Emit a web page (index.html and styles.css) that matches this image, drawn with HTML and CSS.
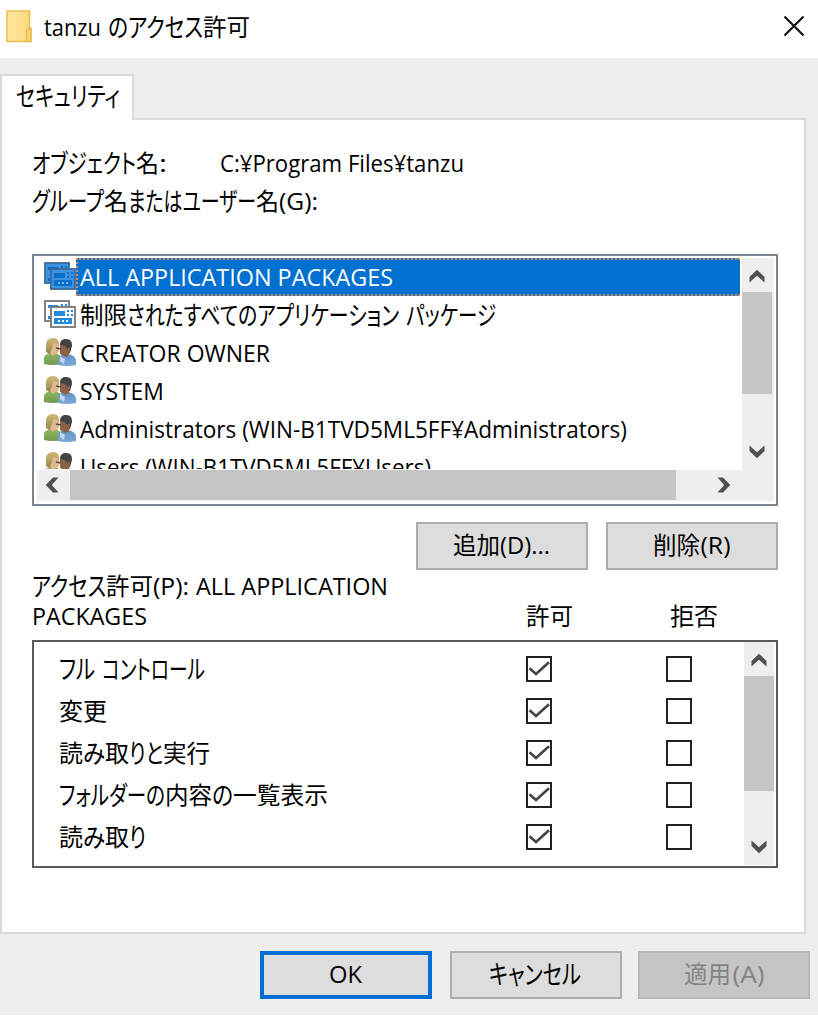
FILE: index.html
```html
<!DOCTYPE html>
<html lang="ja">
<head>
<meta charset="utf-8">
<title>tanzu のアクセス許可</title>
<link rel="stylesheet" href="styles.css">
</head>
<body>
<svg class="defs" width="0" height="0">
  <defs>
    <linearGradient id="hairA" x2="0" y2="1"><stop stop-color="#d0bc77"/><stop offset="1" stop-color="#988149"/></linearGradient>
    <linearGradient id="green" x2="0" y2="1"><stop stop-color="#91b866"/><stop offset="1" stop-color="#70994b"/></linearGradient>
    <linearGradient id="blue" x2="0" y2="1"><stop stop-color="#6494c8"/><stop offset="1" stop-color="#7ba7d6"/></linearGradient>
    <symbol id="people" viewBox="0 0 32 30">
      <path d="M0 26V20C0 17 4 15 9 15s9 3 9 8v3q-9 2-18 0z" fill="url(#green)"/>
      <path d="M14 27v-4c0-5 3-7 8-7 6 0 10 3 10 7v4q-9 2-18 0z" fill="url(#blue)"/>
      <path d="M2 14V7c0-5 3-7 7-7 5 0 6 3 6 7l-1 8q-7 3-12-1z" fill="url(#hairA)"/>
      <path d="M9 5l5 1 1 6q-1 5-4 4l-2 2-3-3 2-5z" fill="#e0b78c"/>
      <path d="M16 7c0-5 3-6 6-6 5 0 6 3 6 7l-2 7h-5z" fill="#434343"/>
      <path d="M16 7l5 1 2 3 2-2 1 2-1 6q-3 3-5 1l-4-2z" fill="#8c6244"/>
      <path d="M16 18l3 2 2 1-1 5-4-3z" fill="#c3d8ea"/>
      <path d="M12 10l5 1" stroke="#554a43" stroke-width="1.5"/>
    </symbol>
    <symbol id="apps" viewBox="0 0 32 28">
      <rect x="1" y="1" width="24" height="20" class="frame"/>
      <path d="M4 5h10v3H4zM17 4h2v2h-2zM21 4h2v2h-2zM4 16h3v3H4z" class="ink"/>
      <rect x="7" y="7" width="24" height="20" class="frame"/>
      <path d="M10 11h11v5H10zM23 10h2v2h-2zM27 10h2v2h-2zM23 14h2v2h-2zM27 14h2v2h-2zM10 18h18v6H10z" class="ink"/>
      <path d="M14 20h2v2h-2zM18 20h2v2h-2zM22 20h2v2h-2z" class="hole"/>
    </symbol>
    <symbol id="up" viewBox="0 0 16 14"><path d="M0.500 8L8 .7 15.500 8v5.500L8 6.800.5 13.500z" fill="#505050"/></symbol>
    <symbol id="tick" viewBox="0 0 22 22"><path d="M1.500 10.200L8 16 21 4.200" fill="none" stroke="#444" stroke-width="2.600"/></symbol>
  </defs>
</svg>
<div class="window">
  <header class="titlebar">
    <svg class="folder" viewBox="0 0 28 34"><defs><linearGradient id="fg"><stop stop-color="#ffe7a0"/><stop offset="1" stop-color="#fcda7b"/></linearGradient></defs><path d="M2 2h22.500V19H26V32.500H2z" fill="url(#fg)" stroke="#e9bd50" stroke-width="1.500"/><path d="M21.500 32.500V22q0-2 2-2h.5q2 0 2 2v10.500z" fill="#f8d376" stroke="#e9bd50" stroke-width="1.500"/></svg>
    <h1 class="title"><span class="t" data-w="57">tanzu</span><span class="gap"></span><span class="t" data-w="95">のアクセス</span><span class="t" data-w="47">許可</span></h1>
    <svg class="close" viewBox="0 0 22 22"><path d="M1.500 1.500l19 19M20.500 1.500l-19 19" stroke="#111" stroke-width="2.200"/></svg>
  </header>
  <nav class="tabs"><div class="tab"><span class="t" data-w="104">セキュリティ</span></div></nav>
  <main class="panel">
    <div class="line object"><div class="label"><span class="t" data-w="104">オブジェクト</span><span class="t" data-w="23">名</span><span class="t" data-w="8">:</span></div><div><span class="t" data-w="244">C:¥Program Files¥tanzu</span></div></div>
    <div class="line"><span class="t" data-w="72">グループ</span><span class="t" data-w="24">名</span><span class="t" data-w="128">またはユーザー</span><span class="t" data-w="23">名</span><span class="t" data-w="39">(G):</span></div>
    <section class="groups">
      <ul class="rows">
        <li class="row selected"><svg class="ico apps"><use href="#apps"/></svg><div class="name"><span class="t" data-w="313">ALL APPLICATION PACKAGES</span></div></li>
        <li class="row"><svg class="ico apps"><use href="#apps"/></svg><div class="name"><span class="t" data-w="47">制限</span><span class="t" data-w="272">されたすべてのアプリケーション</span><span class="gap"></span><span class="t" data-w="90">パッケージ</span></div></li>
        <li class="row"><svg class="ico"><use href="#people"/></svg><div class="name"><span class="t" data-w="190">CREATOR OWNER</span></div></li>
        <li class="row"><svg class="ico"><use href="#people"/></svg><div class="name"><span class="t" data-w="84">SYSTEM</span></div></li>
        <li class="row"><svg class="ico"><use href="#people"/></svg><div class="name"><span class="t" data-w="547">Administrators (WIN-B1TVD5ML5FF¥Administrators)</span></div></li>
        <li class="row"><svg class="ico"><use href="#people"/></svg><div class="name"><span class="t" data-w="351">Users (WIN-B1TVD5ML5FF¥Users)</span></div></li>
      </ul>
      <div class="vbar"><svg class="arrow"><use href="#up"/></svg><i class="thumb"></i><svg class="arrow down"><use href="#up"/></svg></div>
      <div class="hbar"><svg class="arrow left"><use href="#up"/></svg><i class="thumb"></i><svg class="arrow right"><use href="#up"/></svg></div>
    </section>
    <div class="actions">
      <button class="btn"><span class="t" data-w="47">追加</span><span class="t" data-w="50">(D)...</span></button>
      <button class="btn"><span class="t" data-w="47">削除</span><span class="t" data-w="30">(R)</span></button>
    </div>
    <div class="heads">
      <div class="caption"><div><span class="t" data-w="74">アクセス</span><span class="t" data-w="47">許可</span><span class="t" data-w="36">(P):</span><span class="gap"></span><span class="t" data-w="192">ALL APPLICATION</span></div><div><span class="t" data-w="115">PACKAGES</span></div></div>
      <div class="col allow"><span class="t" data-w="47">許可</span></div>
      <div class="col"><span class="t" data-w="48">拒否</span></div>
    </div>
    <section class="perms">
      <ul class="list">
        <li class="perm"><div class="what"><span class="t" data-w="36">フル</span><span class="gap"></span><span class="t" data-w="103">コントロール</span></div><i class="box"><svg><use href="#tick"/></svg></i><i class="box"></i></li>
        <li class="perm"><div class="what"><span class="t" data-w="48">変更</span></div><i class="box"><svg><use href="#tick"/></svg></i><i class="box"></i></li>
        <li class="perm"><div class="what"><span class="t" data-w="24">読</span><span class="t" data-w="22">み</span><span class="t" data-w="24">取</span><span class="t" data-w="34">りと</span><span class="t" data-w="47">実行</span></div><i class="box"><svg><use href="#tick"/></svg></i><i class="box"></i></li>
        <li class="perm"><div class="what"><span class="t" data-w="106">フォルダーの</span><span class="t" data-w="47">内容</span><span class="t" data-w="21">の</span><span class="t" data-w="95">一覧表示</span></div><i class="box"><svg><use href="#tick"/></svg></i><i class="box"></i></li>
        <li class="perm"><div class="what"><span class="t" data-w="24">読</span><span class="t" data-w="22">み</span><span class="t" data-w="24">取</span><span class="t" data-w="17">り</span></div><i class="box"><svg><use href="#tick"/></svg></i><i class="box"></i></li>
      </ul>
      <div class="vbar"><svg class="arrow"><use href="#up"/></svg><i class="thumb"></i><svg class="arrow down"><use href="#up"/></svg></div>
    </section>
  </main>
  <footer class="footer">
    <button class="btn primary"><span class="t" data-w="33">OK</span></button>
    <button class="btn"><span class="t" data-w="92">キャンセル</span></button>
    <button class="btn disabled"><span class="t" data-w="47">適用</span><span class="t" data-w="32">(A)</span></button>
  </footer>
</div>
<script src="fit.js"></script>
</body>
</html>
```
FILE: styles.css
```css
* { box-sizing: border-box; }
body { margin: 0; background: #fff; color: #000; font: 24px/30px "Open Sans", "Noto Sans CJK JP", sans-serif; }
ul { list-style: none; margin: 0; padding: 0; }
i { display: block; }
.defs { display: block; position: absolute; }
.window { width: 818px; height: 1015px; background: #eee; overflow: hidden; }
.t { display: inline-block; white-space: pre; transform-origin: 0 50%; }
.kana { font-feature-settings: "palt"; transform-origin: 0 60%; }
.gap { display: inline-block; width: 7px; }

.titlebar { height: 58px; background: #fff; display: flex; align-items: center; padding: 0 13px 6px 5px; }
.folder { width: 28px; height: 34px; }
.title { flex: 1; margin: 2px 0 0 11px; font-size: inherit; font-weight: 400; }
.close { width: 22px; height: 22px; }

.tabs { height: 60px; padding-top: 16px; }
.tab { width: 134px; height: 46px; border: 2px solid #dadada; border-bottom: 0; background: #fff; padding: 5px 0 0 14px; position: relative; z-index: 1; }
.panel { width: 806px; height: 816px; border: 2px solid #dadada; background: #fff; padding: 28px 26px 0 30px; }
.line { height: 38px; }
.object { display: flex; }
.label { width: 188px; }

.groups { width: 746px; height: 252px; margin-top: 30px; border: 2px solid #7f8490; padding: 2px 2px 3px 3px; display: grid; grid-template: 212px 1fr / 705px 1fr; }
.rows { overflow: hidden; height: 211px; }
.row { height: 38px; display: flex; padding-left: 7px; width: 703px; --frame: #fff; --edge: #777; --ink: #2388df; --hole: #fff; }
.selected { --frame: #3d93df; --edge: #3a6c9c; --ink: #086fca; --hole: #76b7ee; }
.ico { width: 32px; height: 30px; margin-top: 4px; }
.ico.apps { height: 28px; }
.frame { fill: var(--frame); stroke: var(--edge); stroke-width: 1.8; }
.ink { fill: var(--ink); }
.hole { fill: var(--hole); }
.name { flex: 1; padding: 4px 0 0 4px; height: 38px; }
.selected .name { background: #0070d1; color: #fff; border: 2px dotted #d88a58; border-right: 0; padding: 2px 0 0 2px; }
.vbar { background: #eee; display: flex; flex-direction: column; align-items: center; padding-right: 2px; }
.thumb { background: #c5c5c5; }
.arrow { width: 16px; height: 14px; flex: none; }
.vbar .arrow { margin-top: 11px; }
.vbar .thumb { width: 30px; height: 102px; margin-top: 9px; flex: none; }
.vbar .down { margin: auto 0 11px; transform: rotate(180deg); }
.hbar { grid-column: 1 / 3; background: #eee; display: flex; align-items: center; padding-bottom: 1px; }
.hbar .thumb { width: 606px; height: 30px; margin-left: 10px; }
.hbar .left { margin-left: 7px; transform: rotate(-90deg); }
.hbar .right { margin-left: 40px; transform: rotate(90deg); }

.actions { display: flex; justify-content: flex-end; gap: 18px; margin: 16px 0 0; width: 746px; }
.btn { display: block; width: 172px; height: 48px; border: 2px solid #adadad; background: #ddd; padding: 0 2px 2px 0; margin: 0; font: inherit; color: #000; white-space: nowrap; }
.heads { display: flex; height: 70px; padding-top: 1px; }
.caption { width: 494px; }
.col { padding-top: 30px; }
.allow { width: 144px; }

.perms { width: 746px; height: 228px; border: 2px solid #5a5a5a; padding: 0 2px 1px 0; display: flex; }
.list { width: 710px; flex: none; padding-top: 6px; }
.perm { display: flex; align-items: center; height: 42px; padding-left: 25px; }
.what { width: 467px; flex: none; }
.box { width: 26px; height: 26px; border: 2px solid #222; margin-right: 114px; flex: none; }
.box + .box { margin-right: 0; }
.box svg { display: block; width: 22px; height: 22px; }
.perms .vbar { width: 30px; padding-right: 0; }
.perms .thumb { height: 115px; }

.footer { display: flex; padding: 17px 0 0 260px; }
.footer .btn + .btn { margin-left: 18px; }
.footer .btn.disabled { margin-left: 16px; background: #c5c5c5; border-color: #b8b8b8; color: #838383; }
.footer .primary { border: 4px solid #006fd3; }
```
FILE: fit.js
```js
// Condenses each run of text to its UI font width; kana runs are also drawn a little taller.
document.querySelectorAll(".t").forEach(function (el) {
  var kana = /^[\u3040-\u30ff]+$/.test(el.textContent);
  if (kana) el.classList.add("kana");
  var natural = el.getBoundingClientRect().width;
  var width = Number(el.dataset.w);
  el.style.width = width + "px";
  el.style.transform = "scale(" + width / natural + "," + (kana ? 1.1 : 1) + ")";
});
```
